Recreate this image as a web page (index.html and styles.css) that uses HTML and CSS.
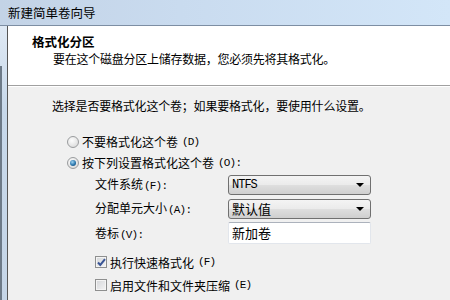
FILE: index.html
```html
<!DOCTYPE html>
<html lang="zh-CN">
<head>
	<meta charset="UTF-8">
	<title>新建简单卷向导</title>
	<link rel="stylesheet" href="styles.css">
</head>
<body>
	<div class="window">
		<div class="titlebar">新建简单卷向导</div>
		<div class="frame">
			<div class="side"></div>
			<div class="client">
				<div class="header">
					<div class="head-title">格式化分区</div>
					<div class="head-sub">要在这个磁盘分区上储存数据，您必须先将其格式化。</div>
				</div>
				<div class="content">
					<p class="prompt">选择是否要格式化这个卷；如果要格式化，要使用什么设置。</p>
					<div class="options">
						<div class="radio-row"><span class="radio"></span>不要格式化这个卷<span class="key">(D)</span></div>
						<div class="radio-row"><span class="radio checked"></span>按下列设置格式化这个卷<span class="key">(O):</span></div>
						<div class="fields">
							<span class="field-label">文件系统<span class="key">(F):</span></span>
							<div class="combo"><span class="combo-value mono">NTFS</span><span class="combo-arrow"></span></div>
							<span class="field-label">分配单元大小<span class="key">(A):</span></span>
							<div class="combo"><span class="combo-value">默认值</span><span class="combo-arrow"></span></div>
							<span class="field-label">卷标<span class="key">(V):</span></span>
							<div class="textbox">新加卷</div>
						</div>
						<div class="checks">
							<div class="check-row">
								<span class="check">
									<svg width="11" height="11" viewBox="0 0 11 11"><path d="M2 5.5 L4.3 8 L9 2.2" fill="none" stroke="#3a5596" stroke-width="2"/></svg>
								</span>执行快速格式化<span class="key">(F)</span>
							</div>
							<div class="check-row"><span class="check"></span>启用文件和文件夹压缩<span class="key">(E)</span></div>
						</div>
					</div>
				</div>
			</div>
		</div>
	</div>
</body>
</html>
```

FILE: styles.css
```css
*{
	margin: 0;
	padding: 0;
	box-sizing: border-box;
}
body{
	width: 450px;
	height: 300px;
	overflow: hidden;
	font-family: "Noto Sans CJK SC", sans-serif;
	font-size: 12px;
	color: #000;
	background: #c8d8ea;
}
.window{
	display: flex;
	flex-direction: column;
	height: 300px;
}
.titlebar{
	height: 26px;
	padding-left: 8px;
	line-height: 26px;
	font-size: 12.5px;
	background: linear-gradient(to right, #c3d3e6, #c9dbef 40%, #d3e6f8);
	border-bottom: 1px solid #7d8ea3;
}
.frame{
	display: flex;
	flex: 1;
}
/* window frame strip on the left, darker edge further down */
.side{
	width: 7px;
	background:
		linear-gradient(to right, #6d7a88 0 2px, transparent 2px) 0 40px / 100% 100% no-repeat,
		linear-gradient(to bottom, #dfe9f4, #c7d8ea 30%, #c5d5e7);
}
.client{
	flex: 1;
	display: flex;
	flex-direction: column;
	border-left: 1px solid #555;
	background: #f0f0f0;
}
.header{
	height: 60px;
	padding: 8px 0 0 24px;
	background: #fff;
	border-bottom: 1px solid #a0a0a0;
	box-shadow: 0 1px 0 #fff;
}
.head-title{
	line-height: 16px;
	font-size: 12.5px;
	font-weight: bold;
}
.head-sub{
	margin-top: 1px;
	padding-left: 21px;
	line-height: 16px;
	letter-spacing: -0.25px;
}
.content{
	padding: 11px 0 0 44px;
}
.prompt{
	line-height: 18px;
	letter-spacing: -0.2px;
}
.options{
	margin-top: 16px;
	margin-left: 15px;
}
.radio-row{
	display: flex;
	align-items: center;
	height: 21px;
	gap: 3px;
}
.radio{
	display: grid;
	place-items: center;
	width: 12px;
	height: 12px;
	border-radius: 50%;
	border: 1px solid #9a9c9e;
	background: radial-gradient(circle at 40% 35%, #fdfdfd, #dcdcdc 80%);
}
.radio.checked::after{
	content: '';
	width: 6px;
	height: 6px;
	border-radius: 50%;
	background: radial-gradient(circle at 40% 35%, #9fd4f2, #2a76ad 55%, #0e3f66);
}
.key{
	font-family: "Liberation Mono", monospace;
	font-size: 11px;
	letter-spacing: -0.8px;
	margin-left: 1px;
}
.fields{
	display: grid;
	grid-template-columns: 133px 143px;
	grid-template-rows: 20px 20px 22px;
	row-gap: 4px;
	align-items: center;
	margin-top: 2px;
	margin-left: 28px;
}
.fields .textbox{
	margin-top: -2px;
}
.field-label{
	line-height: 16px;
}
.combo{
	display: flex;
	align-items: center;
	justify-content: space-between;
	height: 20px;
	padding: 0 6px 0 3px;
	border: 1px solid #707070;
	border-radius: 3px;
	background: linear-gradient(to bottom, #f4f4f4, #ebebeb 48%, #dedede 52%, #cfcfcf);
}
.combo-value{
	font-size: 13px;
	line-height: 16px;
}
.combo-value.mono{
	font-family: "Liberation Mono", monospace;
	font-size: 12px;
	letter-spacing: -1px;
}
.combo-arrow{
	width: 0;
	height: 0;
	border-left: 4px solid transparent;
	border-right: 4px solid transparent;
	border-top: 4px solid #000;
}
.textbox{
	height: 22px;
	padding-left: 3px;
	line-height: 20px;
	font-size: 13px;
	background: #fff;
	border: 1px solid #e2e6ec;
	border-top-color: #acb2bc;
	border-radius: 2px;
}
.checks{
	margin-top: 7px;
	margin-left: 28px;
}
.check-row{
	display: flex;
	align-items: center;
	gap: 3px;
	height: 20px;
	margin-bottom: 3px;
}
.check{
	display: grid;
	place-items: center;
	width: 12px;
	height: 12px;
	border: 1px solid #8e8f8f;
	background: linear-gradient(135deg, #d4d6d9, #f4f4f4);
	box-shadow: inset 0 0 0 1px #f4f4f4;
}
```
